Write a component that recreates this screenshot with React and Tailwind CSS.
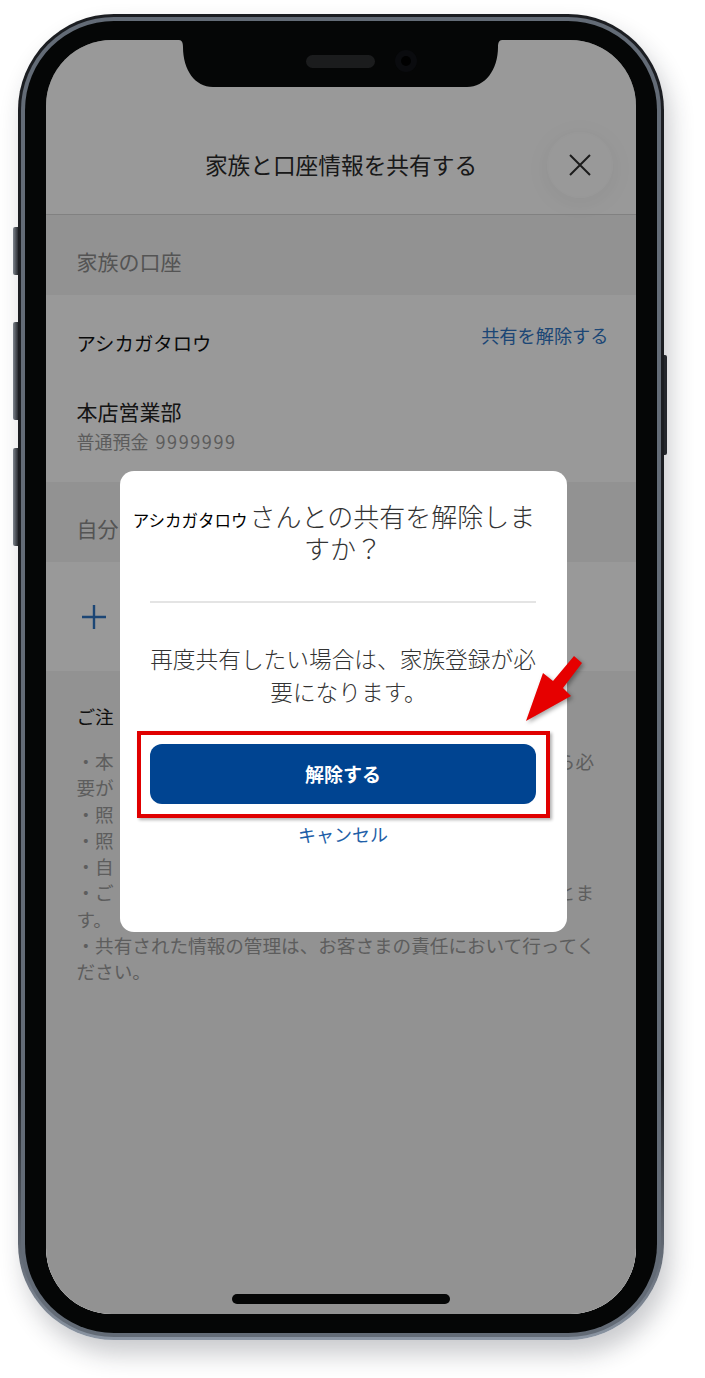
import React from 'react';

const jp = "font-['Noto_Sans_CJK_JP','Noto_Sans_JP',sans-serif]";

// notes rows: the middle of each line is hidden by the dialog
const NoteLine = ({ left, right }) => (
  <div className="flex justify-between whitespace-nowrap h-[26.3px] leading-[26.3px]">
    <span>{left}</span>
    {right && <span>{right}</span>}
  </div>
);

const SideButton = ({ className }) => (
  <div className={`absolute w-[5px] bg-gradient-to-r from-[#7f868f] to-[#2b2e33] rounded-l-[2px] ${className}`} />
);

const CloseIcon = () => (
  <svg width="24" height="24" viewBox="0 0 24 24" fill="none" stroke="#2e2e2e" strokeWidth="2">
    <path d="M2 2 L22 22 M22 2 L2 22" />
  </svg>
);

const Notch = () => (
  <svg className="absolute top-[19px] left-[154px] z-10" width="323" height="48" viewBox="0 0 323 48">
    <path d="M0 0 H323 C320 0 319 3 319 7 C319 30 306 47 288 47 H34 C16 47 4 30 4 7 C4 3 3 0 0 0 Z" fill="#050606" />
    <rect x="127" y="15" width="69" height="13" rx="6.5" fill="#1b1c1d" />
    <circle cx="227" cy="21" r="11" fill="#0a0b0e" />
    <circle cx="227" cy="21" r="5" fill="#000" />
  </svg>
);

const Arrow = () => (
  <svg className="absolute left-[505px] top-[640px] drop-shadow-[2px_2px_2px_rgba(0,0,0,0.35)]" width="90" height="90" viewBox="0 0 90 90">
    <path d="M21 81 L38 33 L48 41 L69 16 L77 23 L58 48 L66 56 Z" fill="#e60000" />
  </svg>
);

export default function App() {
  return (
    <div className={`relative w-[705px] h-[1378px] bg-white overflow-hidden ${jp}`}>
      <div className="pt-[14px] pl-[18px]">
        {/* phone body */}
        <div className="relative w-[646px] h-[1326px] rounded-[96px] p-[3px] bg-gradient-to-b from-[#1b1d21] via-[#1b1d21] via-[80%] to-[#8b95a3] shadow-[6px_14px_24px_rgba(30,35,45,0.24)]">
          <SideButton className="left-[-5px] top-[213px] h-[48px]" />
          <SideButton className="left-[-5px] top-[308px] h-[98px]" />
          <SideButton className="left-[-5px] top-[434px] h-[98px]" />
          <div className="absolute right-[-3px] top-[341px] h-[100px] w-[3px] bg-[#24272c] rounded-r-[2px]" />

          <div className="relative w-full h-full rounded-[93px] p-[4px] bg-[#636b76]">
            <div className="relative w-full h-full rounded-[89px] bg-[#050606]">
              {/* screen */}
              <div className="absolute left-[21px] top-[19px] w-[590px] h-[1274px] rounded-[66px] overflow-hidden bg-white">
                <div className="flex flex-col h-full">
                  <header className="relative h-[175px] shrink-0 flex items-end justify-center border-b border-[#d8d8d8]">
                    <h1 className="text-[22.7px] leading-[34px] pb-[32px] text-[#2a2a2a]">家族と口座情報を共有する</h1>
                    <div className="absolute left-[501px] top-[92px] w-[66px] h-[66px] rounded-full border border-[#fdfdfd] flex items-center justify-center shadow-[0_4px_24px_rgba(0,0,0,0.06)]">
                      <CloseIcon />
                    </div>
                  </header>

                  <section className="h-[80px] shrink-0 bg-[#f3f3f3] px-[30.5px] pt-[30px] text-[21px] leading-[32px] text-[#8c8c8c]">家族の口座</section>

                  <section className="h-[187px] shrink-0 px-[30.5px] pt-[32px]">
                    <div className="flex justify-between items-start">
                      <span className="text-[19.4px] leading-[30px] mt-[1px] text-[#111]">アシカガタロウ</span>
                      <span className="text-[18.2px] leading-[26px] -mt-[5px] mr-[-3px] text-[#2f75c4]">共有を解除する</span>
                    </div>
                    <p className="text-[21px] leading-[30px] mt-[38px] text-[#222]">本店営業部</p>
                    <p className="text-[18px] leading-[26px] mt-[2px] text-[#9a9a9a]">普通預金<span className="ml-[7px] tracking-[1.6px]">9999999</span></p>
                  </section>

                  <section className="h-[80px] shrink-0 bg-[#f3f3f3] px-[30.5px] pt-[30px] text-[21px] leading-[32px] text-[#8c8c8c]">自分</section>

                  <section className="h-[109px] shrink-0 px-[36px] flex items-center">
                    <svg width="24" height="24" viewBox="0 0 24 24" stroke="#2f75c4" strokeWidth="2.4"><path d="M12 0 V24 M0 12 H24" /></svg>
                  </section>

                  <section className="flex-1 bg-[#f3f3f3] pl-[30.5px] pr-[42px] pt-[31px] text-[18.6px] text-[#9c9c9c]">
                    <p className="leading-[28px] text-[#1a1a1a]">ご注</p>
                    <div className="mt-[18px]">
                      <NoteLine left="・本" right="ら必" />
                      <NoteLine left="要が" />
                      <NoteLine left="・照" />
                      <NoteLine left="・照" />
                      <NoteLine left="・自" />
                      <NoteLine left="・ご" right="とま" />
                      <NoteLine left="す。" />
                      <NoteLine left="・共有された情報の管理は、お客さまの責任において行ってく" />
                      <NoteLine left="ださい。" />
                    </div>
                  </section>
                </div>

                {/* dim layer */}
                <div className="absolute inset-0 bg-black/40" />
                <div className="absolute left-[186px] right-[186px] bottom-[10px] h-[10px] rounded-full bg-[#050606]" />
              </div>

              <Notch />
            </div>
          </div>
        </div>
      </div>

      {/* dialog */}
      <div className="absolute left-[120px] top-[471px] w-[447px] h-[461px] bg-white rounded-[14px] pl-[30px] pr-[31px] flex flex-col items-stretch">
        <h2 className="mt-[29px] -mx-[20px] text-center whitespace-nowrap text-[26px] leading-[32px] font-light text-[#333]">
          <span className="text-[16.5px] leading-none font-normal text-black -ml-[18px] mr-[2px]">アシカガタロウ</span>さんとの共有を解除しま<br />すか？
        </h2>
        <div className="mt-[37px] h-[2px] bg-[#e4e4e4]" />
        <p className="mt-[39px] text-center whitespace-nowrap text-[22.7px] leading-[33px] font-light text-[#333]">
          再度共有したい場合は、家族登録が必<br /><span className="ml-[11px]">要になります。</span>
        </p>
        <button className="mt-[36px] h-[60px] rounded-[12px] bg-[#004491] text-white text-[19px] font-bold">解除する</button>
        <a className="mt-[17px] text-center text-[18px] leading-[26px] text-[#1f5fa8]">キャンセル</a>
      </div>

      {/* annotation */}
      <div className="absolute left-[137px] top-[731px] w-[413px] h-[87px] border-[4px] border-[#e00000] shadow-[2px_2px_3px_rgba(0,0,0,0.3)]" />
      <Arrow />
    </div>
  );
}
